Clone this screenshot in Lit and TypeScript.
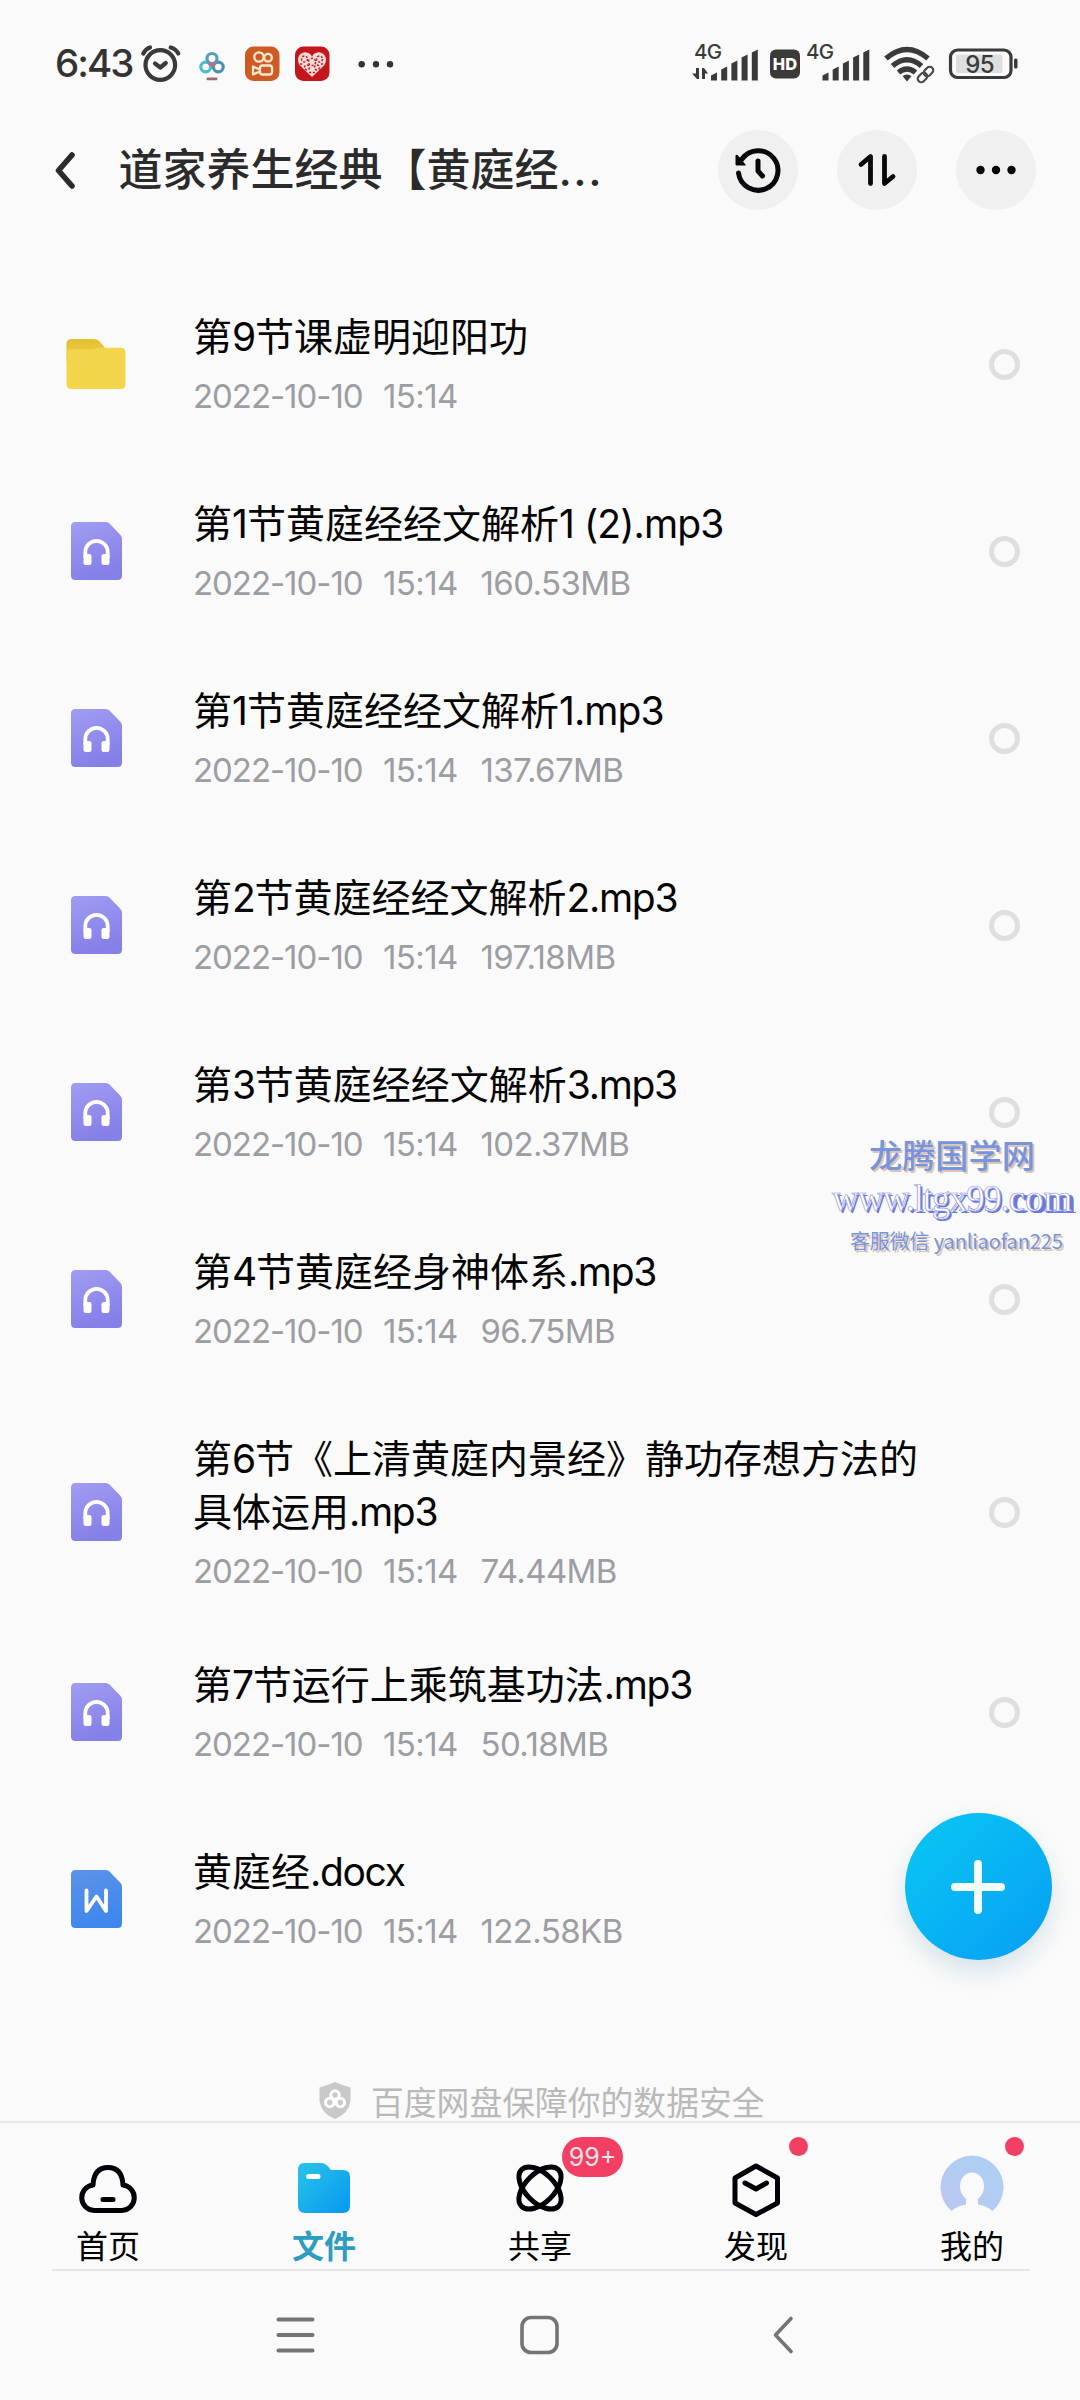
import { LitElement, html, svg, css, nothing } from "lit";
import { customElement, property } from "lit/decorators.js";

type Kind = "folder" | "audio" | "word";

interface FileEntry {
  kind: Kind;
  lines: string[];
  date: string;
  time: string;
  size?: string;
}

const FILES: FileEntry[] = [
  { kind: "folder", lines: ["第9节课虚明迎阳功"], date: "2022-10-10", time: "15:14" },
  { kind: "audio", lines: ["第1节黄庭经经文解析1 (2).mp3"], date: "2022-10-10", time: "15:14", size: "160.53MB" },
  { kind: "audio", lines: ["第1节黄庭经经文解析1.mp3"], date: "2022-10-10", time: "15:14", size: "137.67MB" },
  { kind: "audio", lines: ["第2节黄庭经经文解析2.mp3"], date: "2022-10-10", time: "15:14", size: "197.18MB" },
  { kind: "audio", lines: ["第3节黄庭经经文解析3.mp3"], date: "2022-10-10", time: "15:14", size: "102.37MB" },
  { kind: "audio", lines: ["第4节黄庭经身神体系.mp3"], date: "2022-10-10", time: "15:14", size: "96.75MB" },
  {
    kind: "audio",
    lines: ["第6节《上清黄庭内景经》静功存想方法的", "具体运用.mp3"],
    date: "2022-10-10",
    time: "15:14",
    size: "74.44MB",
  },
  { kind: "audio", lines: ["第7节运行上乘筑基功法.mp3"], date: "2022-10-10", time: "15:14", size: "50.18MB" },
  { kind: "word", lines: ["黄庭经.docx"], date: "2022-10-10", time: "15:14", size: "122.58KB" },
];

/* Splits a name into CJK and Latin runs so that each can be spaced on its own. */
const runs = (text: string) =>
  (text.match(/[\x20-\x7e]+|[^\x20-\x7e]+/g) ?? []).map((run) =>
    /^[\x20-\x7e]/.test(run)
      ? html`<span class="latin ${run.startsWith("1") ? "one" : ""}">${run}</span>`
      : html`<span>${run}</span>`,
  );

const fileIcon = (kind: Kind) => {
  if (kind === "folder") {
    return html`<svg width="60" height="52" viewBox="0 0 60 52">
      <defs>
        <linearGradient id="tab" x1="0" y1="0" x2="0" y2="1">
          <stop offset="0" stop-color="#e3bf31" />
          <stop offset="1" stop-color="#f0d04a" />
        </linearGradient>
      </defs>
      <path fill="url(#tab)" d="M5.500 1H27.500Q31.500 1 34 4L38.500 9V24H0.500V6Q0.500 1 5.500 1Z" />
      <path fill="#f3d54b" d="M0.500 15Q0.500 11.500 4.500 11.500H24.500Q28.500 11.500 31.500 9.700H54.500Q59.500 9.700 59.500 14.500V46Q59.500 51 54.500 51H5.500Q0.500 51 0.500 46Z" />
    </svg>`;
  }
  const audio = kind === "audio";
  return html`<svg width="51" height="59" viewBox="0 0 51 59">
    <defs>
      <linearGradient id="sheet" x1="0" y1="0" x2="0.300" y2="1">
        <stop offset="0" stop-color=${audio ? "#a09df2" : "#5c93e6"} />
        <stop offset="1" stop-color=${audio ? "#857fe8" : "#3f87ee"} />
      </linearGradient>
    </defs>
    <path fill="url(#sheet)" d="M4.500 0H35Q37 0 38.500 1.500L49.500 13Q51 14.500 51 17V53.500Q51 58 46.500 58H4.500Q0 58 0 53.500V4.500Q0 0 4.500 0Z" />
    ${audio
      ? svg`<path fill="none" stroke="#fff" stroke-width="3.800" d="M14.300 36V30A11.200 11.200 0 0 1 36.700 30V36" />
          <rect x="12.500" y="32" width="8" height="11" rx="2.200" fill="#fff" />
          <rect x="30.500" y="32" width="8" height="11" rx="2.200" fill="#fff" />`
      : svg`<path fill="none" stroke="#fff" stroke-width="3.800" stroke-linejoin="round" stroke-linecap="round" d="M15.500 20.500V41L25.500 26.500L35 41V20.500" />`}
  </svg>`;
};

@customElement("file-row")
export class FileRow extends LitElement {
  @property({ attribute: false }) entry!: FileEntry;

  static styles = css`
    :host {
      display: block;
    }
    .row {
      display: grid;
      grid-template-columns: 60px 1fr 31px;
      column-gap: 67px;
      align-items: center;
      padding: 27.5px 60.5px 27.5px 66px;
    }
    .row.tall {
      padding-bottom: 13.5px;
    }
    .icon {
      display: flex;
      justify-content: center;
    }
    .text {
      padding-top: 12px;
    }
    .name {
      font-size: 39px;
      line-height: 53px;
      color: #050505;
      white-space: nowrap;
    }
    .latin {
      letter-spacing: -1.3px;
    }
    .latin.one {
      letter-spacing: -0.9px;
    }
    .meta {
      display: grid;
      grid-template-columns: 190px 97.5px 1fr;
      font-size: 33px;
      font-weight: 400;
      line-height: 67px;
      color: #9c9ea3;
    }
    .date {
      letter-spacing: -1.05px;
    }
    .time {
      letter-spacing: -0.6px;
    }
    .size {
      letter-spacing: -0.6px;
    }
    .check {
      box-sizing: border-box;
      width: 31px;
      height: 31px;
      border: 5px solid #dfdfdf;
      border-radius: 50%;
    }
  `;

  render() {
    const { kind, lines, date, time, size } = this.entry;
    return html`<div class="row ${lines.length > 1 ? "tall" : ""}">
      <div class="icon">${fileIcon(kind)}</div>
      <div class="text">
        ${lines.map((line) => html`<div class="name">${runs(line)}</div>`)}
        <div class="meta">
          <span class="date">${date}</span><span class="time">${time}</span>${size
            ? html`<span class="size">${size}</span>`
            : nothing}
        </div>
      </div>
      <div class="check"></div>
    </div>`;
  }
}

const BARS = [7, 13, 19, 25, 30];
const signal = () =>
  BARS.map(
    (height, i) => svg`<path fill="#3a3a3a" d="M${i * 10.2} ${33 - height}L${i * 10.2 + 6} ${30 - height}V31H${i * 10.2}Z" />`,
  );

@customElement("status-bar")
export class StatusBar extends LitElement {
  static styles = css`
    :host {
      display: block;
    }
    .bar {
      display: flex;
      justify-content: space-between;
      height: 126px;
      padding: 0 62px 0 55px;
      color: #333;
    }
    .side {
      display: flex;
      align-items: center;
    }
    .clock {
      width: 84px;
      font-size: 38.5px;
      font-weight: 500;
      letter-spacing: -2px;
      white-space: nowrap;
    }
    .net {
      font-size: 20.5px;
      font-weight: 500;
      letter-spacing: -0.6px;
    }
    .hd {
      font-size: 16.5px;
      font-weight: 800;
    }
    .level {
      font-size: 24px;
      font-weight: 500;
      letter-spacing: -0.8px;
    }
    text {
      fill: #3a3a3a;
    }
    text.hd {
      fill: #fff;
    }
  `;

  render() {
    return html`<div class="bar">
      <div class="side">
        <span class="clock">6:43</span>
        <svg width="258" height="42" viewBox="139 42 258 42">
          <g fill="none" stroke="#3a3a3a" stroke-width="4.200" stroke-linecap="round">
            <circle cx="160.300" cy="65" r="14.800" />
            <path d="M155 63.500L160.300 67.500L165.800 63" stroke-linejoin="round" />
            <path d="M143.300 53.500Q145.500 49 150 47.500" />
            <path d="M170.700 47.500Q176 49 178.300 53.500" />
          </g>
          <g fill="none" stroke-width="3.200">
            <circle cx="205.700" cy="67" r="4.900" stroke="#4bbcc8" />
            <circle cx="218.300" cy="67" r="4.900" stroke="#4c8fae" />
            <circle cx="212" cy="58.500" r="5" stroke="#5a9bbd" />
            <path d="M208.500 63L212 65.500L215.500 63" stroke="#c96a7c" stroke-width="2.600" />
          </g>
          <rect x="206.500" y="77.500" width="11" height="2.800" rx="1.200" fill="#9a6a78" />
          <rect x="245" y="46.500" width="34.500" height="34.500" rx="8.500" fill="#cf5b24" />
          <g fill="none" stroke="#fde9cf" stroke-width="2.300">
            <circle cx="259" cy="57" r="4.700" />
            <circle cx="268" cy="57.700" r="3.800" />
            <rect x="260" y="65.500" width="12" height="9" rx="2.500" />
            <path d="M260 69.500L253 66.500V74.500L260 71.500" stroke-linejoin="round" />
          </g>
          <rect x="295" y="46.500" width="34.500" height="34.500" rx="8.500" fill="#c4161c" />
          <path fill="#f8d9d6" d="M312 77L299.500 65Q296 58 300.500 54Q306 50 312 55.500Q318 50 323.500 54Q328 58 324.500 65Z" />
          <g fill="none" stroke="#b3262a" stroke-width="1.500" stroke-dasharray="2.200 1.600">
            <circle cx="312" cy="62" r="3.600" />
            <circle cx="304.500" cy="59" r="3" />
            <circle cx="319.500" cy="59" r="3" />
            <circle cx="307" cy="67.500" r="2.500" />
            <circle cx="317" cy="67.500" r="2.500" />
            <path d="M309 72.500H315M312 54V58M300 64H303M321 64H324" />
          </g>
          <g fill="#333">
            <circle cx="361.700" cy="64.300" r="3.200" />
            <circle cx="376" cy="64.300" r="3.200" />
            <circle cx="390" cy="64.300" r="3.200" />
          </g>
        </svg>
      </div>
      <div class="side">
        <svg width="328" height="66" viewBox="690 30 328 66">
          <text class="net" x="694" y="59">4G</text>
          <path fill="#3a3a3a" d="M696 68H699V79H697L692 73.500H696ZM702 79V68H704L708 73.500H705V79Z" />
          <g transform="translate(711 49.500)">${signal()}</g>
          <rect x="770" y="49.500" width="30" height="29" rx="6" fill="#3a3a3a" />
          <text class="hd" x="785" y="70" text-anchor="middle">HD</text>
          <text class="net" x="806" y="59">4G</text>
          <g transform="translate(822.500 49.500)">${signal()}</g>
          <g fill="none" stroke="#3a3a3a" stroke-width="5.400">
            <path d="M886 58.500Q907 40.500 928 58.500" />
            <path d="M892.500 66Q907 53.500 921.500 66" />
            <path d="M898.500 72.500Q907 65.500 915.500 72.500" />
          </g>
          <path fill="#3a3a3a" d="M902.500 76Q907 73 911.500 76L907 81.500Z" />
          <g fill="none" stroke="#fafafa" stroke-width="6" transform="rotate(-45 925 74.500)">
            <rect x="915.500" y="71" width="19" height="7" rx="3.500" />
          </g>
          <g fill="none" stroke="#4a4a4a" stroke-width="2.200" transform="rotate(-45 925.500 74.500)">
            <rect x="916" y="71" width="10.500" height="7" rx="3.500" />
            <rect x="924.500" y="71" width="10.500" height="7" rx="3.500" />
          </g>
          <rect x="950.500" y="50" width="60.500" height="27.500" rx="7" fill="#fafafa" stroke="#3a3a3a" stroke-width="3.200" />
          <rect x="956" y="54.500" width="46.500" height="18.500" rx="2" fill="#dedede" />
          <rect x="1014" y="58.500" width="3.500" height="10" rx="1.500" fill="#3a3a3a" />
          <text class="level" x="979.500" y="72.500" text-anchor="middle">95</text>
        </svg>
      </div>
    </div>`;
  }
}

@customElement("app-root")
export class AppRoot extends LitElement {
  static styles = css`
    :host {
      display: block;
      font-family: Inter, "Noto Sans CJK SC", sans-serif;
    }
    svg {
      display: block;
    }
    .screen {
      position: relative;
      display: flex;
      flex-direction: column;
      width: 1080px;
      height: 2400px;
      overflow: hidden;
      background: #fafafa;
    }
    .header {
      display: flex;
      align-items: center;
      height: 88px;
      padding: 0 44px 0 55px;
    }
    .title {
      flex: 1;
      margin: 0 0 0 43.5px;
      padding-top: 1px;
      font-size: 44px;
      font-weight: 500;
      line-height: 60px;
      color: #2b2b2b;
      white-space: nowrap;
    }
    .dots {
      letter-spacing: 1.5px;
    }
    .actions {
      display: flex;
      gap: 39px;
    }
    .round {
      display: flex;
      align-items: center;
      justify-content: center;
      width: 80px;
      height: 80px;
      border-radius: 50%;
      background: #f0f0f1;
    }
    .list {
      padding-top: 57px;
      height: 1811px;
      flex: none;
    }
    .promise {
      display: flex;
      align-items: center;
      gap: 20px;
      height: 38px;
      padding: 0 0 1px 319px;
      font-size: 32.8px;
      color: #b9b9b9;
      white-space: nowrap;
    }
    .tabs {
      box-sizing: border-box;
      display: grid;
      grid-template-columns: repeat(5, 1fr);
      height: 148px;
      border-top: 2px solid #e6e8e8;
    }
    .tab {
      display: flex;
      flex-direction: column;
      align-items: center;
      font-size: 32px;
      line-height: 46px;
      color: #000;
    }
    .glyph {
      position: relative;
      display: flex;
      justify-content: center;
      width: 80px;
      height: 101px;
      align-items: end;
    }
    .tab.active {
      font-weight: 700;
      color: #2c9cc2;
    }
    .badge {
      position: absolute;
      left: 62px;
      top: 14px;
      width: 61px;
      height: 40px;
      border-radius: 20px;
      background: #f23f63;
      color: #ffe3e8;
      font-size: 25px;
      line-height: 40px;
      text-align: center;
    }
    .dot {
      position: absolute;
      left: 73px;
      top: 14px;
      width: 19px;
      height: 19px;
      border-radius: 50%;
      background: #f23f63;
    }
    .rule {
      height: 2px;
      margin: 0 50px 0 52px;
      background: #e6e6e6;
    }
    .system {
      display: flex;
      height: 130px;
      padding-left: 275px;
      align-items: center;
      gap: 204px;
    }
    .back {
      margin-left: 5px;
    }
    .fab {
      position: absolute;
      left: 904.5px;
      top: 1813px;
      width: 147px;
      height: 147px;
      display: flex;
      align-items: center;
      justify-content: center;
      border-radius: 50%;
      background: linear-gradient(135deg, #08c0f3 20%, #08a4f4 85%);
      box-shadow: 0 12px 24px rgba(60, 130, 160, 0.18);
    }
    .mark {
      position: absolute;
      left: 832px;
      top: 1131px;
      width: 248px;
      display: flex;
      flex-direction: column;
      white-space: nowrap;
      color: #7794de;
      font-family: "Noto Sans CJK SC", sans-serif;
      text-shadow: 2px 2px 0 #dcc4b6;
    }
    .site {
      padding-left: 37px;
      font-size: 33.2px;
      font-weight: 500;
      line-height: 46px;
    }
    .url {
      font-family: "Liberation Serif", serif;
      font-size: 37px;
      line-height: 44px;
      letter-spacing: -1.3px;
      color: #fff;
      -webkit-text-stroke: 0.7px #8f97e6;
      text-shadow: 2px 2px 0 #6c78dc;
    }
    .bold {
      letter-spacing: 0;
      text-shadow: 1px 1px 0 #6c78dc, 2px 2px 0 #6c78dc, 3px 2px 0 #6c78dc, 4px 2px 0 #6c78dc;
    }
    .wechat {
      padding-left: 18px;
      font-size: 20px;
      line-height: 40px;
      letter-spacing: -0.15px;
    }
  `;

  render() {
    return html`<div class="screen">
      <status-bar></status-bar>
      <div class="header">
        <svg width="20" height="40" viewBox="0 0 20 40">
          <path d="M17 5L3.500 20.500L17 36" fill="none" stroke="#2b2b2b" stroke-width="5.600" stroke-linecap="round" stroke-linejoin="round" />
        </svg>
        <h1 class="title">道家养生经典【黄庭经<span class="dots">...</span></h1>
        <div class="actions">
          <div class="round">
            <svg width="48" height="48" viewBox="0 0 48 48">
              <g fill="none" stroke="#08080c" stroke-width="5" stroke-linecap="round" stroke-linejoin="round">
                <path d="M4.500 27A19.800 19.800 0 1 0 8 13" />
                <path d="M24 15V25L28.500 30" />
              </g>
              <path fill="#08080c" d="M1.500 9.500Q2.500 8 4 9.500L11.500 18.500V19.500H2.500Q1.500 19.500 1.500 18Z" />
            </svg>
          </div>
          <div class="round">
            <svg width="40" height="36" viewBox="0 0 40 36">
              <path d="M4 12.500L13.500 4.500V31.500M27.500 4.500V31.500L36 24.500" fill="none" stroke="#08080c" stroke-width="4.800" stroke-linecap="round" stroke-linejoin="round" />
            </svg>
          </div>
          <div class="round">
            <svg width="42" height="10" viewBox="0 0 42 10">
              <g fill="#000"><circle cx="5.500" cy="5" r="4.200" /><circle cx="21" cy="5" r="4.200" /><circle cx="36.500" cy="5" r="4.200" /></g>
            </svg>
          </div>
        </div>
      </div>

      <div class="list">${FILES.map((entry) => html`<file-row .entry=${entry}></file-row>`)}</div>

      <div class="promise">
        <svg width="32" height="37" viewBox="0 0 32 37">
          <path fill="#c9c9c9" d="M16 0Q24 3.500 31.500 5.500V19Q30 31 16 37Q2 31 0.500 19V5.500Q8 3.500 16 0Z" />
          <g fill="none" stroke="#fff" stroke-width="3"><circle cx="16" cy="13" r="4.200" /><circle cx="10.700" cy="20.500" r="4.200" /><circle cx="21.300" cy="20.500" r="4.200" /></g>
        </svg>
        <span>百度网盘保障你的数据安全</span>
      </div>

      <div class="tabs">
        <div class="tab">
          <div class="glyph">
            <svg width="60" height="62" viewBox="77.500 2161 60 62">
              <path d="M93.500 2209.500A12.800 12.800 0 0 1 92.500 2184Q93.500 2166.500 107.500 2166.500Q121.500 2166.500 122.500 2184A12.800 12.800 0 0 1 121.500 2209.500Z" fill="none" stroke="#000006" stroke-width="5" stroke-linejoin="round" />
              <path d="M102.500 2198.500H112.500" stroke="#000006" stroke-width="5" stroke-linecap="round" />
            </svg>
          </div>
          <span>首页</span>
        </div>
        <div class="tab active">
          <div class="glyph">
            <svg width="54" height="62" viewBox="297 2165 54 62">
              <defs>
                <linearGradient id="blue" x1="0" y1="0" x2="1" y2="1">
                  <stop offset="0.100" stop-color="#27bfe8" />
                  <stop offset="0.900" stop-color="#0a9cf0" />
                </linearGradient>
              </defs>
              <path fill="url(#blue)" d="M304 2166H321Q325 2166 328 2169.500L331 2173H343Q350 2173 350 2180V2209Q350 2216 343 2216H305Q298 2216 298 2209V2173Q298 2166 304 2166Z" />
              <path d="M308.500 2179.500H318" stroke="#fff" stroke-width="5" stroke-linecap="round" />
            </svg>
          </div>
          <span>文件</span>
        </div>
        <div class="tab">
          <div class="glyph">
            <svg width="52" height="62" viewBox="514 2161 52 62">
              <g fill="none" stroke="#000006" stroke-width="5">
                <ellipse cx="540" cy="2187" rx="26" ry="14.500" transform="rotate(45 540 2187)" />
                <ellipse cx="540" cy="2187" rx="26" ry="14.500" transform="rotate(-45 540 2187)" />
              </g>
            </svg>
            <span class="badge">99+</span>
          </div>
          <span>共享</span>
        </div>
        <div class="tab">
          <div class="glyph">
            <svg width="52" height="64" viewBox="729.500 2162 52 64">
              <path d="M755.500 2168L777 2180V2205L755.500 2216.500L734.500 2205V2180ZM744.500 2185L755.500 2191L766 2185" fill="none" stroke="#000006" stroke-width="5" stroke-linejoin="round" stroke-linecap="round" />
            </svg>
            <span class="dot"></span>
          </div>
          <span>发现</span>
        </div>
        <div class="tab">
          <div class="glyph">
            <svg width="64" height="72" viewBox="940 2155 64 72">
              <defs>
                <linearGradient id="face" x1="1" y1="0" x2="0" y2="1">
                  <stop offset="0.300" stop-color="#afcff2" />
                  <stop offset="1" stop-color="#bcc6f0" />
                </linearGradient>
              </defs>
              <path fill="url(#face)" d="M951.500 2214A31.500 31.500 0 1 1 992.500 2214Q986 2208.500 978 2207.500V2202Q984 2197 984 2189A12 13.500 0 0 0 960 2189Q960 2197 966 2202V2207.500Q958 2208.500 951.500 2214Z" />
            </svg>
            <span class="dot"></span>
          </div>
          <span>我的</span>
        </div>
      </div>
      <div class="rule"></div>
      <div class="system">
        <svg width="40" height="40" viewBox="0 0 40 40">
          <path d="M3.500 4.500H37.500M3.500 20H37.500M3.500 35.500H37.500" stroke="#747474" stroke-width="4" stroke-linecap="round" />
        </svg>
        <svg width="40" height="40" viewBox="0 0 40 40">
          <rect x="3" y="2.500" width="35" height="35" rx="9" fill="none" stroke="#747474" stroke-width="3.600" />
        </svg>
        <svg class="back" width="30" height="40" viewBox="0 0 30 40">
          <path d="M23 3.500L7.500 20L23 36.500" fill="none" stroke="#747474" stroke-width="3.600" stroke-linecap="round" stroke-linejoin="round" />
        </svg>
      </div>

      <div class="fab">
        <svg width="56" height="56" viewBox="0 0 56 56">
          <path d="M28 5V51M5 28H51" stroke="#f4ffff" stroke-width="8" stroke-linecap="round" />
        </svg>
      </div>
      <div class="mark">
        <div class="site">龙腾国学网</div>
        <div class="url">www.ltgx99.<span class="bold">com</span></div>
        <div class="wechat">客服微信 yanliaofan225</div>
      </div>
    </div>`;
  }
}
